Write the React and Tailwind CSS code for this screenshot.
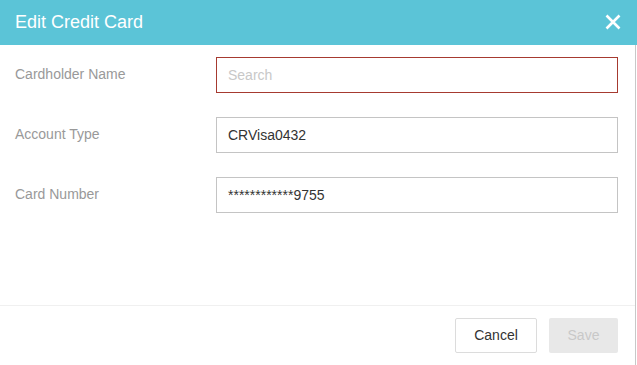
export default function App() {
  const font = { fontFamily: '"Liberation Sans", Arial, sans-serif' };
  return (
    <div className="w-[637px] h-[365px] bg-white flex flex-col" style={font}>
      <div className="h-[45px] bg-[#5bc4d7] flex items-center justify-between pl-[15px] pr-[16px] pb-[1px]">
        <span className="text-white text-[18px] leading-none">Edit Credit Card</span>
        <svg width="16" height="16" viewBox="0 0 16 16">
          <path d="M1.5 1.5 L14.5 14.5 M14.5 1.5 L1.5 14.5" stroke="white" strokeWidth="2.6" strokeLinecap="butt" />
        </svg>
      </div>
      <div className="w-[636px] flex-1 border-r border-[#c8c8c8] flex flex-col">
        <div className="flex-1 pt-[12px] flex flex-col gap-[24px] border-b border-[#f0f0f0]">
          <div className="flex items-center h-[36px]">
            <div className="w-[216px] pl-[15px] text-[14px] text-[#999] pb-[1px]">Cardholder Name</div>
            <div className="w-[402px] h-[36px] border border-[#a63a30] flex items-center px-[11px] text-[14px] text-[#c8c8c8]">Search</div>
          </div>
          <div className="flex items-center h-[36px]">
            <div className="w-[216px] pl-[15px] text-[14px] text-[#999] pb-[1px]">Account Type</div>
            <div className="w-[402px] h-[36px] border border-[#c4c4c4] flex items-center px-[11px] text-[14px] text-[#333]">CRVisa0432</div>
          </div>
          <div className="flex items-center h-[36px]">
            <div className="w-[216px] pl-[15px] text-[14px] text-[#999] pb-[1px]">Card Number</div>
            <div className="w-[402px] h-[36px] border border-[#c4c4c4] flex items-center px-[11px] text-[14px] text-[#333]">************9755</div>
          </div>
        </div>
        <div className="h-[59px] flex items-start justify-end gap-[12px] pr-[17px] pt-[12px]">
          <div className="w-[82px] h-[35px] border border-[#dcdcdc] rounded-[2px] flex items-center justify-center text-[14px] text-[#333]">Cancel</div>
          <div className="w-[69px] h-[35px] bg-[#e8e8e8] rounded-[2px] flex items-center justify-center text-[14px] text-[#c8c8c8]">Save</div>
        </div>
      </div>
    </div>
  );
}
